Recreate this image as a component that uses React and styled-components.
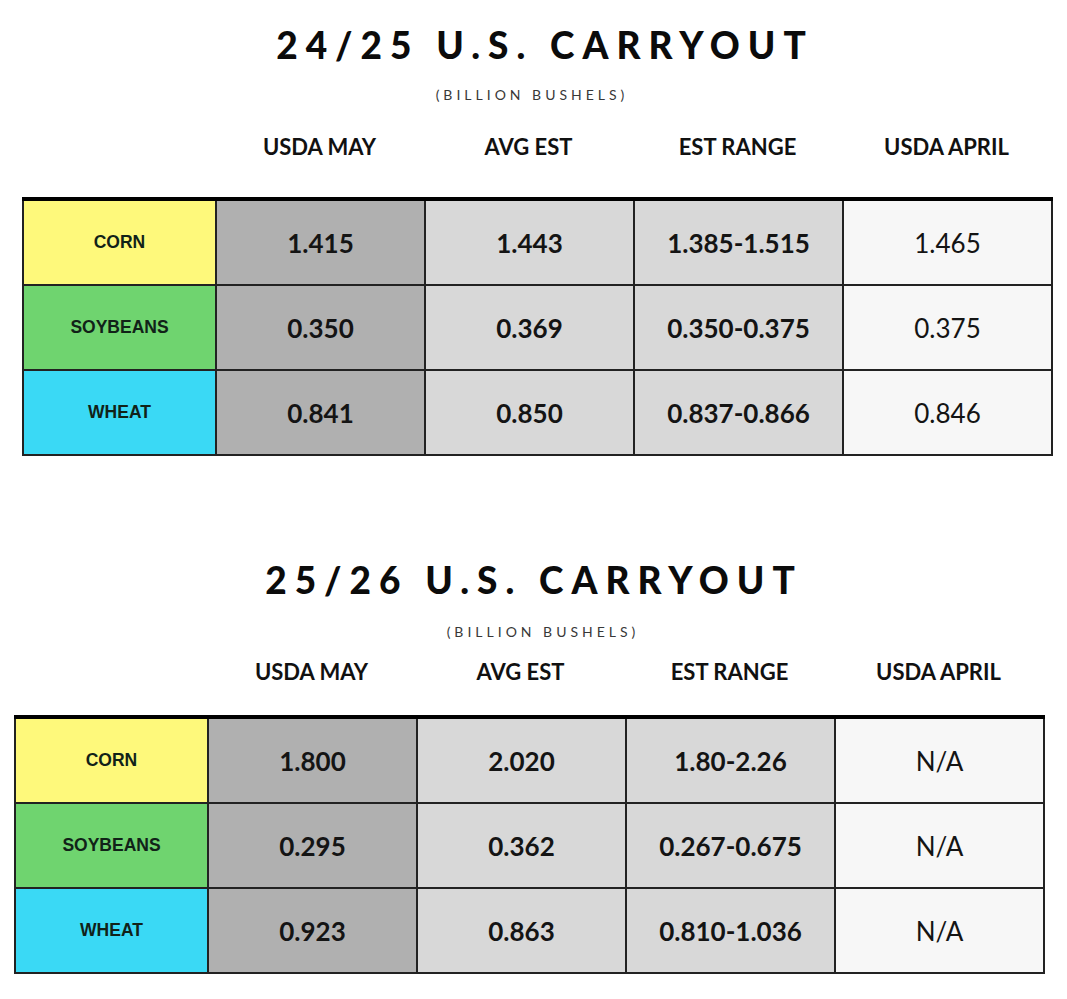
import React from "react";
import styled, { createGlobalStyle } from "styled-components";

const GlobalStyle = createGlobalStyle`
  body {
    margin: 0;
    background: #ffffff;
    font-family: "Lato", "Liberation Sans", sans-serif;
  }
`;

const columns = ["USDA MAY", "AVG EST", "EST RANGE", "USDA APRIL"];

const crops = {
  corn: { name: "CORN", color: "#fef97b" },
  soy: { name: "SOYBEANS", color: "#6fd46f" },
  wheat: { name: "WHEAT", color: "#3ad9f5" },
};

const tables = [
  {
    title: "24/25 U.S. CARRYOUT",
    shift: 22,
    top: 25,
    titleNudge: 6,
    subGap: 22,
    subNudge: -16,
    headGap: 32,
    tableGap: 38,
    rows: [
      ["corn", "1.415", "1.443", "1.385-1.515", "1.465"],
      ["soy", "0.350", "0.369", "0.350-0.375", "0.375"],
      ["wheat", "0.841", "0.850", "0.837-0.866", "0.846"],
    ],
  },
  {
    title: "25/26 U.S. CARRYOUT",
    shift: 14,
    top: 104,
    titleNudge: 0,
    subGap: 24,
    subNudge: 22,
    headGap: 20,
    tableGap: 31,
    rows: [
      ["corn", "1.800", "2.020", "1.80-2.26", "N/A"],
      ["soy", "0.295", "0.362", "0.267-0.675", "N/A"],
      ["wheat", "0.923", "0.863", "0.810-1.036", "N/A"],
    ],
  },
];

function App() {
  return (
    <Page>
      <GlobalStyle />
      {tables.map((t) => (
        <Section key={t.title} $shift={t.shift} $top={t.top}>
          <Title $nudge={t.titleNudge}>{t.title}</Title>
          <Subtitle $gap={t.subGap} $nudge={t.subNudge}>
            (BILLION BUSHELS)
          </Subtitle>
          <HeaderRow $gap={t.headGap}>
            <span />
            {columns.map((c) => (
              <HeaderCell key={c}>{c}</HeaderCell>
            ))}
          </HeaderRow>
          <Grid $gap={t.tableGap}>
            {t.rows.map(([crop, may, avg, range, april]) => (
              <React.Fragment key={crop}>
                <LabelCell $bg={crops[crop].color}>{crops[crop].name}</LabelCell>
                <ValueCell $bg="#b0b0b0">{may}</ValueCell>
                <ValueCell $bg="#d8d8d8">{avg}</ValueCell>
                <ValueCell $bg="#d8d8d8">{range}</ValueCell>
                <ValueCell $bg="#f7f7f7" $light>
                  {april}
                </ValueCell>
              </React.Fragment>
            ))}
          </Grid>
        </Section>
      ))}
    </Page>
  );
}

export default App;

// nudge > 0 pushes a centred line right, < 0 pushes it left
const nudgeMargins = (n, spacing = 0) =>
  n >= 0
    ? `margin-left: ${n}px; margin-right: ${-spacing}px;`
    : `margin-left: 0; margin-right: ${-n - spacing}px;`;

const Page = styled.div`
  display: flex;
  flex-direction: column;
  width: 1067px;
`;

const Section = styled.section`
  display: flex;
  flex-direction: column;
  align-items: flex-start;
  margin-left: ${(p) => p.$shift}px;
  padding-top: ${(p) => p.$top}px;
  width: 1032px;
`;

const Title = styled.h1`
  margin: 0;
  align-self: center;
  ${(p) => nudgeMargins(p.$nudge, 8)}
  font-family: "Lato", sans-serif;
  font-weight: 900;
  font-size: 37px;
  line-height: 40px;
  letter-spacing: 8px;
  color: #0b0b0b;
`;

const Subtitle = styled.div`
  align-self: center;
  margin-top: ${(p) => p.$gap}px;
  ${(p) => nudgeMargins(p.$nudge, 4)}
  font-family: "Lato", sans-serif;
  font-size: 14px;
  line-height: 16px;
  letter-spacing: 4px;
  color: #383838;
`;

const HeaderRow = styled.div`
  display: grid;
  grid-template-columns: 193px repeat(4, 209px);
  width: 100%;
  margin-top: ${(p) => p.$gap}px;
`;

const HeaderCell = styled.div`
  text-align: center;
  font-family: "Lato", sans-serif;
  font-weight: 700;
  font-size: 22px;
  line-height: 24px;
  color: #111;
`;

const Grid = styled.div`
  display: grid;
  grid-template-columns: 191px repeat(4, 207px);
  grid-auto-rows: 83px;
  gap: 2px;
  padding: 0 2px 2px 2px;
  margin-top: ${(p) => p.$gap}px;
  border-top: 4px solid #000;
  background: #222;
`;

const LabelCell = styled.div`
  display: flex;
  align-items: center;
  justify-content: center;
  background: ${(p) => p.$bg};
  font-family: "Liberation Sans", Arial, sans-serif;
  font-weight: 700;
  font-size: 17.5px;
  color: #112218;
`;

const ValueCell = styled.div`
  display: flex;
  align-items: center;
  justify-content: center;
  background: ${(p) => p.$bg};
  font-family: "Lato", sans-serif;
  font-weight: ${(p) => (p.$light ? 400 : 700)};
  font-size: 26px;
  color: #141414;
`;
